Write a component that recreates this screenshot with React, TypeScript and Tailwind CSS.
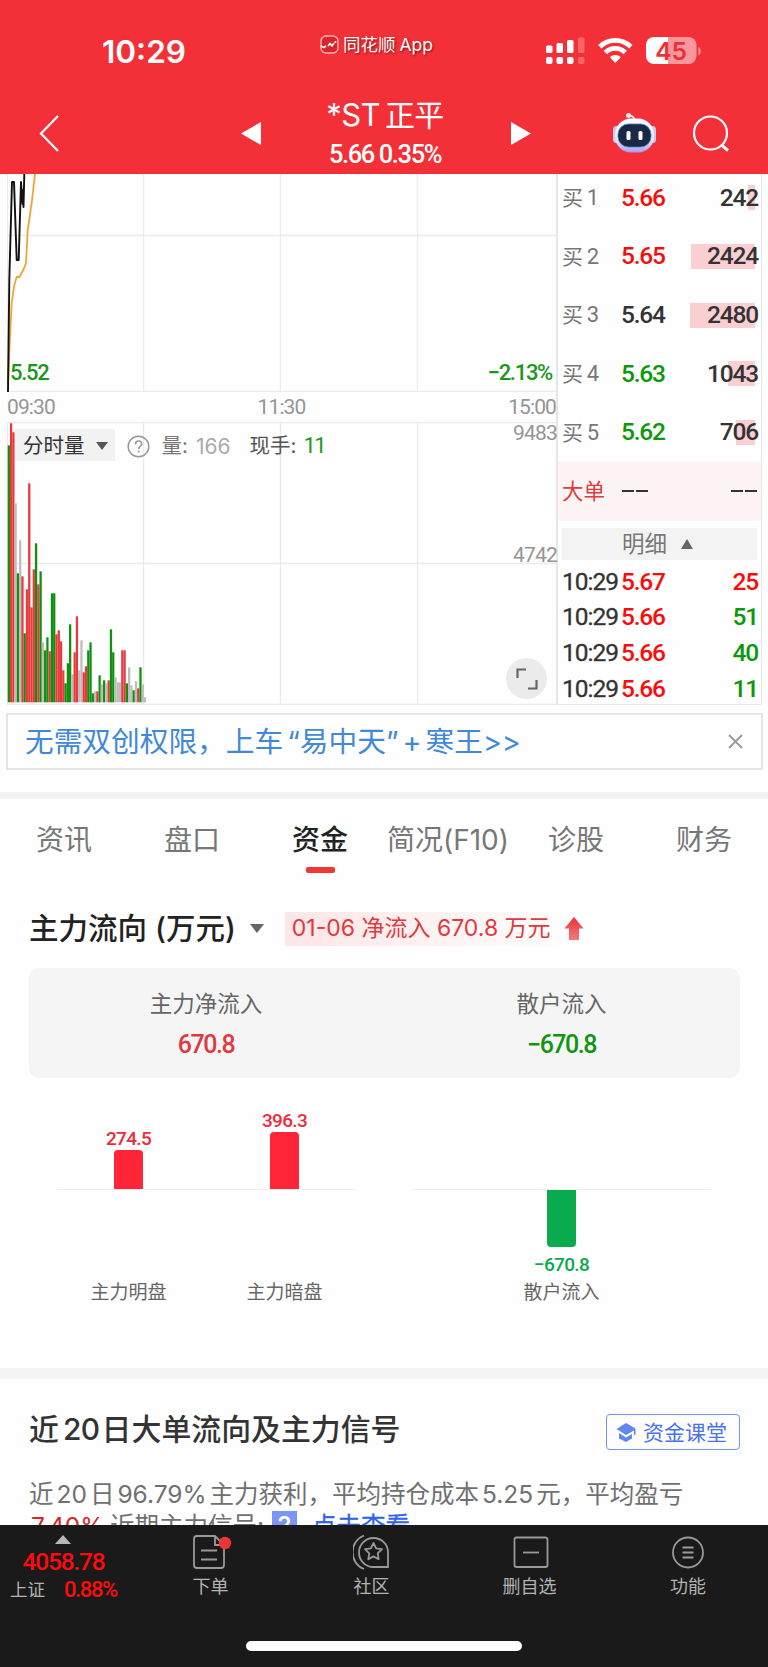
const num = "font-['Roboto','Noto_Sans_CJK_SC',sans-serif]"

const VOLUME =
    'g257 r279 r270 s199 g129 s162 r126 g69 r113 r219 r95 r133 g159 r118 g131 s60 g52 g65 r51 g109 g109 r68 r72 r61 r32 g19 g39 g78 s28 r50 r86 s32 s62 r30 r36 g52 g60 g9 s11 r11 g27 s18 g22 s19 r22 g73 g50 s25 s20 s20 r52 r52 g19 s35 s17 g12 s21 r14 g35 s18 s5'

const barColors: Record<string, string> = { g: '#109010', r: '#e83a3c', s: '#bdbdbd' }

const bids = [
    { label: '1', price: '5.66', color: 'text-[#f80c0c]', qty: '242', bar: 7 },
    { label: '2', price: '5.65', color: 'text-[#f80c0c]', qty: '2424', bar: 64 },
    { label: '3', price: '5.64', color: 'text-[#333333]', qty: '2480', bar: 65 },
    { label: '4', price: '5.63', color: 'text-[#0b990b]', qty: '1043', bar: 27 },
    { label: '5', price: '5.62', color: 'text-[#0b990b]', qty: '706', bar: 19 },
]

const ticks = [
    { price: '5.67', qty: '25', color: 'text-[#f80c0c]' },
    { price: '5.66', qty: '51', color: 'text-[#0b990b]' },
    { price: '5.66', qty: '40', color: 'text-[#0b990b]' },
    { price: '5.66', qty: '11', color: 'text-[#0b990b]' },
]

const tabs = ['资讯', '盘口', '资金', '简况(F10)', '诊股', '财务']

function StatusBar() {
    return (
        <div className="flex h-[84px] items-start pt-[35px] text-white">
            <div className="ml-[102px] mt-[1px] w-[218px] text-[31.5px] leading-[31px] font-semibold">10:29</div>
            <div className="flex w-[226px] items-center gap-[4px] text-[17.5px] leading-[19px] [text-shadow:1px_1px_2px_rgba(90,0,0,0.7)]">
                <svg width="19" height="19" viewBox="0 0 19 19" fill="none">
                    <rect x="1" y="1" width="17" height="17" rx="5" fill="#d9252c" stroke="#ffb3b3" strokeWidth="1.4" />
                    <path d="M1 11l3 1.500L6 11M8 11l2-2.500 2 2.500 2-3M15.500 6v2" stroke="#fff" strokeWidth="1.600" />
                </svg>
                <div>同花顺<span className="ml-[4px]">App</span></div>
            </div>
            <svg width="156" height="31" viewBox="546 35 156 31" fill="#fff">
                <rect x="546" y="45.500" width="6.500" height="7.500" rx="1.500" />
                <rect x="556.500" y="43" width="6.500" height="10" rx="1.500" />
                <rect x="567" y="40" width="6.500" height="13" rx="1.500" />
                <rect x="578" y="37.500" width="6.500" height="15.500" rx="1.500" opacity=".25" />
                <rect x="546" y="57" width="6.500" height="7" rx="2" />
                <rect x="556.500" y="57" width="6.500" height="7" rx="2" />
                <rect x="567" y="57" width="6.500" height="7" rx="2" />
                <rect x="578" y="57" width="6.500" height="7" rx="2" opacity=".25" />
                <g fill="none" stroke="#fff" strokeWidth="4.800">
                    <path d="M599.800 46.700a22.400 22.400 0 0 1 31 0" />
                    <path d="M605.300 52.500a14.400 14.400 0 0 1 20 0" />
                </g>
                <path d="M609.800 57.300a8 8 0 0 1 11 0L615.300 63z" />
                <path d="M654 37h14v27h-14a8 8 0 0 1-8-8V45a8 8 0 0 1 8-8z" />
                <path d="M668 37h20.500a8 8 0 0 1 8 8v11a8 8 0 0 1-8 8H668z" opacity=".5" />
                <path d="M698.500 47c3 1 3 7 0 8.500z" opacity=".5" />
                <text x="671" y="59.500" textAnchor="middle" fontSize="24.500" fontWeight="600" fill="#ea3139" className="font-['Inter',sans-serif]">45</text>
            </svg>
        </div>
    )
}

function Header() {
    return (
        <div className="h-[174px] bg-[#f33038]">
            <StatusBar />
            <div className="flex h-[90px] text-white">
                <svg className="ml-[38px] mt-[30px]" width="22" height="38" viewBox="0 0 22 38" fill="none" stroke="#fff" strokeWidth="2.200">
                    <path d="M20 2L3 19.500 20 37" />
                </svg>
                <svg className="ml-[181px] mt-[38px]" width="20" height="23" fill="#fff">
                    <path d="M20 0v23L0 11.500z" />
                </svg>
                <div className="w-[248px] text-center">
                    <div className="mt-[14px] text-[31px] leading-[34px] font-normal tracking-[-0.6px]">
                        *ST<span className="ml-[5px] text-[30px]">正平</span>
                    </div>
                    <div className={`${num} mt-[7px] text-[25.5px] leading-[30px] font-medium tracking-[-1.4px]`}>5.66 0.35%</div>
                </div>
                <svg className="mt-[38px] ml-[2px]" width="20" height="23" fill="#fff">
                    <path d="M0 0v23l20-11.500z" />
                </svg>
                <svg className="ml-[80px] mt-[27px]" width="46" height="44" viewBox="611 111 46 44">
                    <defs>
                        <linearGradient id="head" x1="0" y1="0" x2="0" y2="1">
                            <stop offset="0" stopColor="#fdfdff" />
                            <stop offset=".65" stopColor="#e4e4fb" />
                            <stop offset="1" stopColor="#a99af2" />
                        </linearGradient>
                    </defs>
                    <path d="M628 116c4-1 6 1 6.500 4" fill="none" stroke="#f6dfe6" strokeWidth="2" />
                    <circle cx="628.500" cy="115.500" r="2.500" fill="#fbe9ee" />
                    <rect x="613" y="126" width="7" height="17" rx="3.500" fill="#c9c8f3" />
                    <rect x="649" y="126" width="7" height="17" rx="3.500" fill="#c9c8f3" />
                    <rect x="615" y="118.500" width="39" height="34" rx="16" fill="url(#head)" />
                    <rect x="618" y="124" width="33" height="23" rx="10.500" fill="#1a2747" stroke="#3c8ca6" strokeWidth=".8" />
                    <rect x="626.500" y="131" width="4" height="9" rx="1.500" fill="#fff" />
                    <rect x="638.500" y="131" width="4" height="9" rx="1.500" fill="#fff" />
                </svg>
                <svg className="ml-[35px] mt-[30px]" width="40" height="40" viewBox="692 114 40 40" fill="none" stroke="#fff" strokeWidth="2.200">
                    <circle cx="710.500" cy="133" r="16.500" />
                    <path d="M721.500 145l6.500 5.500" strokeWidth="3" />
                </svg>
            </div>
        </div>
    )
}

function PriceChart() {
    return (
        <div className="relative h-[218px]">
            <svg width="549" height="218" viewBox="0 0 549 218" fill="none">
                <path d="M.5 0v218M136.500 0v218M273.500 0v218M410.500 0v218M0 61.500h550M0 217.500h550" stroke="#ececf0" strokeWidth="1.300" />
                <path d="M1 209L3 163l1.700-34 2.600-18 2.400-8h2.600l4-7 2.700-7 1.700-33 4-27L28 0" stroke="#f2a435" strokeWidth="1.800" />
                <path d="M1 218L2.300 106 5 8h2l2.700 78h2L14 8l1.500 22 .5-14 .5 17L17.300 0" stroke="#111" strokeWidth="1.900" strokeLinejoin="round" />
            </svg>
            <div className={`${num} absolute inset-x-0 bottom-[7px] flex justify-between pr-[4px] pl-[3px] text-[22px] leading-[24px] font-medium tracking-[-1.3px] text-[#1a981a]`}>
                <span>5.52</span>
                <span>−2.13%</span>
            </div>
        </div>
    )
}

function VolumeChart() {
    return (
        <div className="relative h-[283px]">
            <svg width="549" height="283" viewBox="0 0 549 283">
                <path d="M.5 0v283M136.500 0v283M273.500 0v283M410.500 0v283M0 .5h550M0 141.500h550M0 282.500h550" stroke="#ebebeb" strokeWidth="1.300" />
                <rect x="6" y="7" width="102" height="32" fill="#f2f2f2" />
                {VOLUME.split(' ').map((bar, i) => {
                    const h = Number(bar.slice(1))
                    return <rect key={i} x={0.7 + i * 2.27} y={280.3 - h} width={2.27} height={h} fill={barColors[bar[0]]} />
                })}
            </svg>
            <div className="absolute top-[8px] left-[16px] flex h-[32px] items-center text-[20.5px] leading-none text-[#777]">
                <span className="text-[#333]">分时量</span>
                <svg className="ml-[11px]" width="12" height="8" fill="#555"><path d="M0 0h12L6 8z" /></svg>
                <svg className="ml-[19px]" width="23" height="23" fill="none" stroke="#999" strokeWidth="1.500">
                    <circle cx="11.500" cy="11.500" r="10.300" />
                    <path d="M8.500 9.200c0-4.200 6.200-4.200 6.200-.3 0 2.300-3.100 2.500-3.100 5.100M11.600 15.500v2" strokeWidth="1.700" />
                </svg>
                <span className="ml-[12px]">量:</span>
                <span className="ml-[8px] text-[21px] text-[#aaa]">166</span>
                <span className="ml-[19px] text-[#555]">现手:</span>
                <span className={`${num} ml-[7px] text-[22px] tracking-[-1.4px] text-[#1a981a]`}>11</span>
            </div>
            <span className={`${num} absolute top-0 right-[-1px] text-[21px] leading-[22px] tracking-[-0.8px] text-[#959595]`}>9483</span>
            <span className={`${num} absolute top-[122px] right-[-1px] text-[21px] leading-[22px] tracking-[-0.8px] text-[#959595]`}>4742</span>
            <div className="absolute top-[236px] left-[499px] flex size-[41px] items-center justify-center rounded-full bg-[#ebebeb]">
                <svg width="22" height="22" fill="none" stroke="#666" strokeWidth="2.200">
                    <path d="M1.500 10V1.500H10M20.500 12v8.500H12" />
                </svg>
            </div>
        </div>
    )
}

function OrderBook() {
    return (
        <div className={`${num} w-[206px] overflow-hidden border-r border-l-2 border-[#e6e6e6] text-[24.5px] leading-none tracking-[-1.2px] text-[#333]`}>
            <div className="-mt-[5.5px]">
                {bids.map((b) => (
                    <div key={b.label} className="flex h-[58.700px] items-center pr-[3px] pl-[4px]">
                        <span className="w-[59px] text-[22px] text-[#777]">
                            <span className="text-[21px]">买</span>
                            <span className="ml-[5px]">{b.label}</span>
                        </span>
                        <span className={`font-medium ${b.color}`}>{b.price}</span>
                        <span className="relative ml-auto flex h-[25px] items-center font-medium">
                            <span className="absolute top-0 right-[3px] h-[25px] bg-[#f9cfd2]" style={{ width: b.bar }}></span>
                            <span className="relative">{b.qty}</span>
                        </span>
                    </div>
                ))}
            </div>
            <div className="flex h-[59px] items-center bg-[#fef4f5] pr-[4px] pl-[4px]">
                <span className="w-[60px] text-[21.5px] tracking-normal text-[#e03a3a]">大单</span>
                <span className="flex gap-[2px]"><i className="h-[2px] w-[12px] bg-[#333]"></i><i className="h-[2px] w-[12px] bg-[#333]"></i></span>
                <span className="ml-auto flex gap-[2px]"><i className="h-[2px] w-[12px] bg-[#333]"></i><i className="h-[2px] w-[12px] bg-[#333]"></i></span>
            </div>
            <div className="mt-[7px] mr-[4px] ml-[4px] flex h-[32px] items-center bg-[#f3f3f3] pl-[60px] text-[22.5px] tracking-normal text-[#777]">
                明细
                <svg className="ml-[14px]" width="12" height="10" fill="#666"><path d="M0 10h12L6 0z" /></svg>
            </div>
            <div className="mt-[4px]">
                {ticks.map((t, i) => (
                    <div key={i} className="flex h-[35.700px] items-center pr-[3px] pl-[4px]">
                        <span className="w-[59px] tracking-[-1px] [-webkit-text-stroke:0.3px_#333]">10:29</span>
                        <span className="font-medium text-[#f80c0c]">{t.price}</span>
                        <span className={`ml-auto font-medium ${t.color}`}>{t.qty}</span>
                    </div>
                ))}
            </div>
        </div>
    )
}

function FundFlow() {
    return (
        <div>
            <div className="flex h-[97px] items-center pt-[18px] pl-[29px]">
                <div className="text-[29.5px] leading-none font-medium text-[#222]">
                    主力流向<span className="ml-[8px]">(万元)</span>
                </div>
                <svg className="ml-[14px]" width="14" height="9" fill="#666"><path d="M0 0h14L7 9z" /></svg>
                <div className="ml-[21px] flex h-[34px] w-[311px] items-center bg-linear-to-r from-[#fde6e7] to-white pl-[7px] text-[23px] leading-none whitespace-pre text-[#e0393f]">
                    <span>01-06 净流入 670.8 万元</span>
                    <svg className="ml-[13px]" width="20" height="23" viewBox="0 0 20 23">
                        <defs>
                            <linearGradient id="up" x1="0" y1="0" x2="0" y2="1">
                                <stop offset="0" stopColor="#e53238" />
                                <stop offset="1" stopColor="#f47b7b" />
                            </linearGradient>
                        </defs>
                        <path d="M10 0l9.500 11.500H15V23H5V11.500H.5z" fill="url(#up)" />
                    </svg>
                </div>
            </div>
            <div className="mr-[28px] ml-[29px] flex h-[110px] rounded-[10px] bg-[#f5f5f5] text-center leading-none text-[#666]">
                <div className="w-[354px]">
                    <div className="mt-[25px] text-[22.5px]">主力净流入</div>
                    <div className={`${num} mt-[16px] text-[25px] font-medium tracking-[-1.5px] text-[#e0393f]`}>670.8</div>
                </div>
                <div className="w-[357px]">
                    <div className="mt-[25px] text-[22.5px]">散户流入</div>
                    <div className={`${num} mt-[16px] text-[25px] font-medium tracking-[-1.5px] text-[#109510]`}>−670.8</div>
                </div>
            </div>
            <div className={`${num} flex justify-between px-[57px] text-center text-[19px] leading-none font-medium tracking-[-0.7px]`}>
                <div className="w-[299px]">
                    <div className="flex h-[112px] items-end justify-center gap-[86px] border-b border-[#ededed] text-[#f2283c]">
                        <div className="flex w-[70px] flex-col items-center gap-[2px]">
                            274.5
                            <div className="h-[39px] w-[28.5px] rounded-t-[4px] bg-[#ff2538]"></div>
                        </div>
                        <div className="flex w-[70px] flex-col items-center gap-[2px]">
                            396.3
                            <div className="h-[57px] w-[28.5px] rounded-t-[4px] bg-[#ff2538]"></div>
                        </div>
                    </div>
                    <div className="mt-[93px] flex justify-center gap-[76px] font-normal tracking-normal text-[#666]">
                        <span className="w-[80px]">主力明盘</span>
                        <span className="w-[80px]">主力暗盘</span>
                    </div>
                </div>
                <div className="w-[299px]">
                    <div className="h-[112px] border-b border-[#ededed]"></div>
                    <div className="flex h-[93px] flex-col items-center text-[#0ba84c]">
                        <div className="mb-[8px] h-[57px] w-[28.5px] rounded-b-[4px] bg-[#0aab4e]"></div>
                        −670.8
                    </div>
                    <div className="font-normal tracking-normal text-[#666]">散户流入</div>
                </div>
            </div>
        </div>
    )
}

function Signals() {
    return (
        <div className="h-[146px] overflow-hidden pl-[29px]">
            <div className="mt-[35px] flex h-[36px] items-center justify-between pr-[28px]">
                <h2 className="-mt-[4px] text-[29.900px] leading-none font-medium text-[#333]">
                    近<span className="mr-[2px] ml-[4px] tracking-[-0.5px]">20</span>日大单流向及主力信号
                </h2>
                <div className="flex h-[36px] w-[134px] items-center rounded-[4px] border-[1.5px] border-[#7591ee] pl-[9px] text-[21px] leading-none text-[#4a72ea]">
                    <svg className="mr-[7px]" width="20" height="19" viewBox="0 0 20 19" fill="#6387f0">
                        <path d="M10 0l9.500 5.500v6.500h-1.500V7.500L10 12 .5 6z" />
                        <path d="M3 10l7 4.500 6-3.500v4.500L10 19l-7-3.500z" />
                    </svg>
                    资金课堂
                </div>
            </div>
            <div className="mt-[28px] text-[24.500px] leading-[33px] whitespace-nowrap text-[#707070]">
                <div>近<span className="mx-[3px]">20</span>日<span className="mx-[3px]">96.79%</span>主力获利，平均持仓成本<span className="mx-[3px]">5.25</span>元，平均盈亏</div>
                <div className="-mt-[1px] flex items-start">
                    <span className="w-[81px] pl-[2px] text-[#d8262c]">7.40%</span>
                    <span className="w-[162px]">近期主力信号:</span>
                    <span className="mt-[1px] h-[30px] w-[25px] bg-[#7d95f5] text-center text-[23px] leading-[28px] font-semibold text-white">2</span>
                    <span className="ml-[15px] text-[#2f62ea] [-webkit-text-stroke:0.3px_#2f62ea]">点击查看</span>
                </div>
            </div>
        </div>
    )
}

function BottomNav() {
    return (
        <div className="h-[142px] bg-[#1a1a1a] text-[18px] leading-none text-[#b3b3b3]">
            <div className="flex h-[116px]">
                <div className="w-[127px] pt-[10px]">
                    <svg className="ml-[55px]" width="16" height="9" fill="#b8b8b8"><path d="M0 9h16L8 0z" /></svg>
                    <div className={`${num} mt-[6px] text-center text-[24.500px] font-medium tracking-[-1.2px] text-[#fb0d0d]`}>4058.78</div>
                    <div className="mt-[4px] flex items-center pl-[10px]">
                        <span className="text-[17.500px]">上证</span>
                        <span className={`${num} ml-[19px] text-[22px] font-medium tracking-[-1.4px] text-[#fb0d0d]`}>0.88%</span>
                    </div>
                </div>
                <div className="flex w-[167px] flex-col items-center">
                    <svg className="mt-[9px]" width="44" height="36" viewBox="189 1534 44 36" fill="none" stroke="#999" strokeWidth="1.800">
                        <path d="M215 1536h-18a3 3 0 0 0-3 3v26a3 3 0 0 0 3 3h24a3 3 0 0 0 3-3v-20zM215 1536v9h9M201 1550.500h16M201 1559.500h16" />
                        <circle cx="225" cy="1543" r="6.200" fill="#ee3434" stroke="none" />
                    </svg>
                    <span className="mt-[8px]">下单</span>
                </div>
                <div className="flex w-[155px] flex-col items-center">
                    <svg className="mt-[9px]" width="38" height="36" viewBox="352 1534 38 36" fill="none" stroke="#999" strokeWidth="1.800">
                        <path d="M387 1567v-15a14.500 14.500 0 1 0-14.500 15zM363 1535.500a18 18 0 0 0 0 33.500" />
                        <path d="M372.500 1543l2.600 5.400 5.900.8-4.300 4.100 1 5.900-5.200-2.800-5.200 2.800 1-5.900-4.300-4.100 5.900-.8z" strokeLinejoin="round" />
                    </svg>
                    <span className="mt-[8px]">社区</span>
                </div>
                <div className="flex w-[161px] flex-col items-center">
                    <svg className="mt-[9px]" width="38" height="36" viewBox="511 1534 38 36" fill="none" stroke="#999" strokeWidth="1.800">
                        <rect x="514.500" y="1537.500" width="33" height="29.500" rx="2" />
                        <path d="M523 1552.500h16" />
                    </svg>
                    <span className="mt-[8px]">删自选</span>
                </div>
                <div className="flex w-[156px] flex-col items-center">
                    <svg className="mt-[9px]" width="36" height="36" fill="none" stroke="#999" strokeWidth="1.800">
                        <circle cx="18" cy="18.500" r="15" />
                        <path d="M12.500 13.500h11M12.500 18.500h11M12.500 23.500h11" />
                    </svg>
                    <span className="mt-[8px]">功能</span>
                </div>
            </div>
            <div className="mx-auto h-[10px] w-[276px] rounded-full bg-white"></div>
        </div>
    )
}

export default function App() {
    return (
        <div className="h-[1667px] w-[768px] overflow-hidden bg-[#fefefe] font-['Inter','Noto_Sans_CJK_SC',sans-serif]">
            <Header />
            <div className="ml-[7px] flex h-[531px] w-[755px] border-b border-[#e8e8e8]">
                <div className="w-[549px]">
                    <PriceChart />
                    <div className={`${num} flex h-[30px] items-center justify-between text-[21px] leading-none tracking-[-0.9px] text-[#959595]`}>
                        <span>09:30</span>
                        <span>11:30</span>
                        <span>15:00</span>
                    </div>
                    <VolumeChart />
                </div>
                <OrderBook />
            </div>
            <div className="mt-[8px] ml-[6px] flex h-[57px] w-[757px] items-center border-2 border-[#e3e6e8] pl-[17px] text-[28.700px] leading-none text-[#4189d8]">
                <span className="mt-[2px]">无需双创权限，</span>
                <span className="mt-[2px]">上车<span className="mx-[4px]">“易中天”</span>+<span className="ml-[4px]">寒王&gt;&gt;</span></span>
                <svg className="mr-[18px] ml-auto" width="15" height="15" stroke="#999" strokeWidth="1.800">
                    <path d="M1 1l13 13M14 1L1 14" />
                </svg>
            </div>
            <div className="mt-[22px] h-[7px] bg-[#f3f3f3]"></div>
            <div className="flex h-[72px] text-[28px] leading-none text-[#777]">
                {tabs.map((t) => (
                    <div key={t} className="flex w-[128px] flex-col items-center pt-[27px] whitespace-nowrap">
                        {t === '资金' ? <span className="font-medium text-[#222]">{t}</span> : <span>{t}</span>}
                        {t === '资金' && <i className="mt-[13px] h-[6px] w-[29px] shrink-0 rounded-[2px] bg-[#f23636]"></i>}
                    </div>
                ))}
            </div>
            <div className="h-[497px]">
                <FundFlow />
            </div>
            <div className="h-[11px] bg-[#f3f3f3]"></div>
            <Signals />
            <BottomNav />
        </div>
    )
}
